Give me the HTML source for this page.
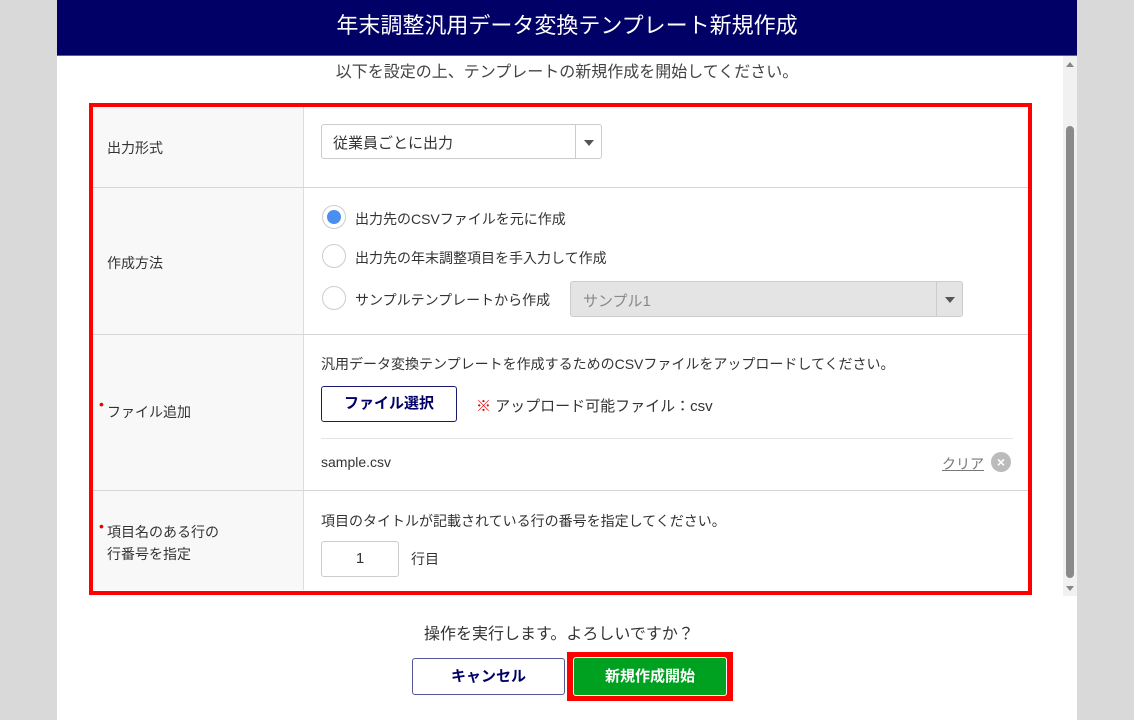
<!DOCTYPE html>
<html><head><meta charset="utf-8"><style>
*{box-sizing:border-box;margin:0;padding:0}
body{width:1134px;height:720px;background:#d9d9d9;font-family:"Liberation Sans","Noto Sans CJK JP",sans-serif;color:#333;position:relative;overflow:hidden}
.modal{position:absolute;left:57px;top:0;width:1020px;height:720px;background:#fff}
.hdr{position:absolute;left:0;top:0;width:1020px;height:56px;background:#000066;color:#fff;font-size:22px;text-align:center;line-height:52px;border-bottom:1px solid #5a5aa0}
.a{position:absolute}
.sub{left:0;width:1020px;top:58px;text-align:center;font-size:16px;color:#444}
.red{left:32px;top:103px;width:943px;height:492px;border:4px solid #f00}
.lab{position:absolute;left:36px;width:211px;background:#f8f8f8;font-size:14px;color:#333;border-right:1px solid #ddd}
.hl{position:absolute;left:36px;width:935px;height:1px;background:#d6d6d6}
.t{font-size:14px;color:#333;white-space:nowrap}
.radio{position:absolute;width:24px;height:24px;border:1px solid #ccc;border-radius:50%;background:#fff}
.dot{position:absolute;left:4px;top:4px;width:14px;height:14px;border-radius:50%;background:#4a8ff0}
.sel{position:absolute;border:1px solid #ccc;border-radius:3px;background:#fff;font-size:15px}
.arr{position:absolute;right:0;top:0;bottom:0;width:26px;border-left:1px solid #ccc}
.arr:after{content:"";position:absolute;left:8px;top:50%;margin-top:-2px;border:5px solid transparent;border-top:6px solid #555;border-bottom:0}
.btn{position:absolute;border:1px solid #1a1a6e;border-radius:3px;background:#fff;color:#000066;font-weight:bold;font-size:15px;text-align:center}
</style></head><body>
<div class="modal">
<div class="hdr">年末調整汎用データ変換テンプレート新規作成</div>
<div class="a sub">以下を設定の上、テンプレートの新規作成を開始してください。</div>
<div class="a" style="left:1006px;top:56px;width:14px;height:540px;background:#f1f1f1"></div>
<div class="a" style="left:1009px;top:126px;width:8px;height:452px;background:#8a8a8a;border-radius:4px"></div>
<div class="a" style="left:1009px;top:62px;border:4px solid transparent;border-bottom:5px solid #888;border-top:0"></div>
<div class="a" style="left:1009px;top:586px;border:4px solid transparent;border-top:5px solid #888;border-bottom:0"></div>
<div class="lab" style="top:107px;height:81px"><span class="a t" style="left:14px;top:31px">出力形式</span></div>
<div class="lab" style="top:188px;height:147px"><span class="a t" style="left:14px;top:65px">作成方法</span></div>
<div class="lab" style="top:335px;height:156px"><span class="a t" style="left:14px;top:67px"><span style="color:#e00;position:absolute;left:-8px;top:-6px">•</span>ファイル追加</span></div>
<div class="lab" style="top:491px;height:99px"><span class="a t" style="left:14px;top:30px;line-height:22px"><span style="color:#e00;position:absolute;left:-8px;top:-6px">•</span>項目名のある行の<br>行番号を指定</span></div>
<div class="hl" style="top:187px"></div><div class="hl" style="top:334px"></div><div class="hl" style="top:490px"></div>
<div class="a red"></div>
<div class="sel" style="left:264px;top:124px;width:281px;height:35px"><span class="a" style="left:11px;top:7px">従業員ごとに出力</span><div class="arr"></div></div>
<div class="radio" style="left:265px;top:205px"><div class="dot"></div></div>
<span class="a t" style="left:298px;top:209px">出力先のCSVファイルを元に作成</span>
<div class="radio" style="left:265px;top:244px"></div>
<span class="a t" style="left:298px;top:248px">出力先の年末調整項目を手入力して作成</span>
<div class="radio" style="left:265px;top:286px"></div>
<span class="a t" style="left:298px;top:290px">サンプルテンプレートから作成</span>
<div class="sel" style="left:513px;top:281px;width:393px;height:36px;background:#e4e4e4;color:#888"><span class="a" style="left:12px;top:8px">サンプル1</span><div class="arr"></div></div>
<span class="a t" style="left:264px;top:354px">汎用データ変換テンプレートを作成するためのCSVファイルをアップロードしてください。</span>
<div class="btn" style="left:264px;top:386px;width:136px;height:36px;line-height:34px">ファイル選択</div>
<span class="a t" style="left:419px;top:395px;font-size:15px"><b style="color:#e00">※</b> アップロード可能ファイル：csv</span>
<div class="a" style="left:264px;top:438px;width:692px;height:1px;background:#e4e4e4"></div>
<span class="a t" style="left:264px;top:454px">sample.csv</span>
<span class="a t" style="left:885px;top:454px;color:#777;text-decoration:underline">クリア</span>
<div class="a" style="left:934px;top:452px;width:20px;height:20px;border-radius:50%;background:#bbb;color:#fff;font-size:14px;font-weight:bold;text-align:center;line-height:20px">×</div>
<span class="a t" style="left:264px;top:511px">項目のタイトルが記載されている行の番号を指定してください。</span>
<div class="a" style="left:264px;top:541px;width:78px;height:36px;border:1px solid #ccc;border-radius:3px;text-align:center;line-height:34px;font-size:15px">1</div>
<span class="a t" style="left:354px;top:549px">行目</span>
<span class="a" style="left:367px;top:620px;font-size:16px;color:#333">操作を実行します。よろしいですか？</span>
<div class="btn" style="left:355px;top:658px;width:153px;height:37px;line-height:35px;border-color:#555599">キャンセル</div>
<div class="a" style="left:510px;top:652px;width:166px;height:49px;background:#f00"></div>
<div class="a" style="left:516px;top:657px;width:154px;height:39px;background:#00a020;border:1px solid #fff;border-radius:3px;color:#fff;font-weight:bold;font-size:15px;text-align:center;line-height:37px">新規作成開始</div>
</div>
</body></html>
